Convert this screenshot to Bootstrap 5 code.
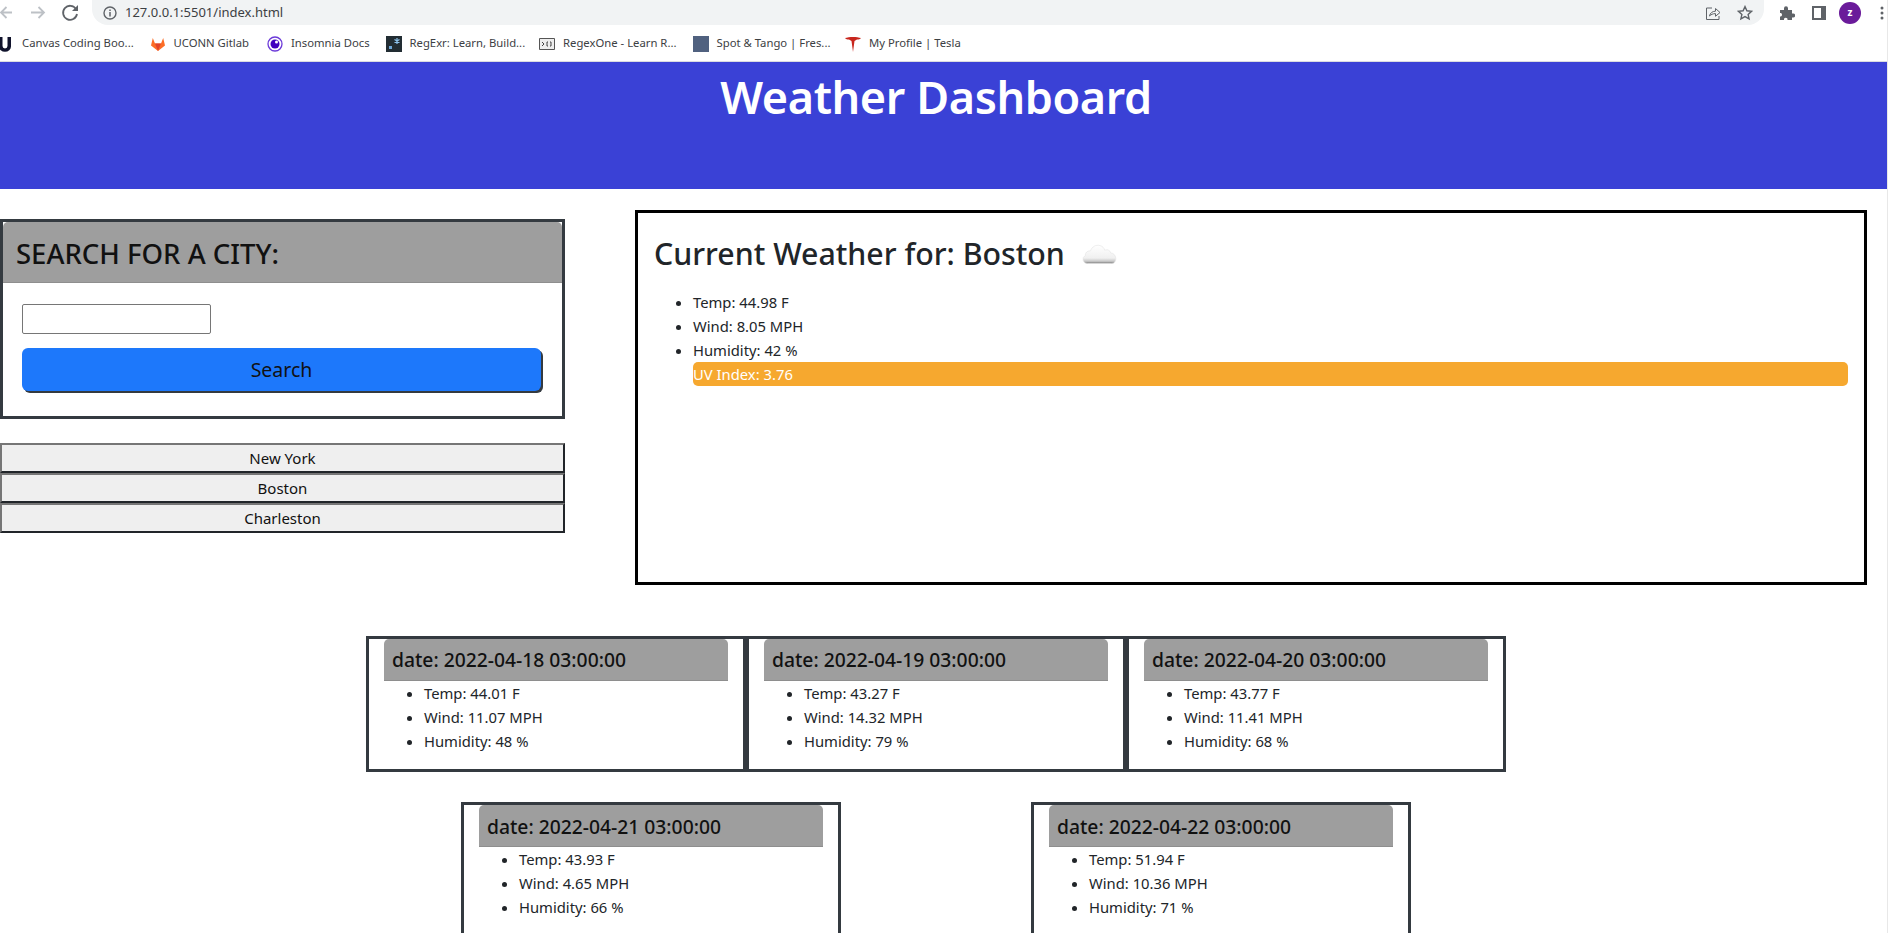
<!DOCTYPE html>
<html lang="en">
<head>
    <meta charset="UTF-8">
    <meta name="viewport" content="width=device-width, initial-scale=1.0">
    <title>Weather Dashboard</title>
    <link rel="stylesheet" href="https://cdn.jsdelivr.net/npm/bootstrap@5.3.0/dist/css/bootstrap.min.css">
    <style>
        html, body {
            height: 933px;
            overflow: hidden;
        }
        body {
            font-family: "Noto Sans", "Open Sans", sans-serif;
            background: #fff;
            border-right: 1px solid #e8e8e8;
        }
        .chrome-bar {
            height: 25px;
            color: #5f6368;
        }
        .chrome-nav {
            width: 92px;
            flex: none;
        }
        .addr-bar {
            background: #f1f3f4;
            border-radius: 0 0 16px 16px;
            padding: 0 7px 0 11px;
            font-size: 13px;
            color: #3c4043;
        }
        .chrome-tools {
            width: 123px;
            flex: none;
        }
        .tool-puzzle { margin-left: 15px; }
        .tool-side { margin-left: 17px; }
        .tool-dots { margin-left: 19px; }
        .avatar {
            width: 22px;
            height: 22px;
            margin-left: 13px;
            background: #6a1b9a;
            color: #fff;
            font-size: 10px;
            font-weight: 700;
        }
        .marks-bar {
            height: 37px;
            font-size: 11.3px;
            color: #3c4043;
            padding-top: 1px;
            border-bottom: 1px solid #dadce0;
            white-space: nowrap;
        }
        .marks-bar svg {
            margin-left: 8.5px;
        }
        .marks-bar svg:first-child {
            margin-left: -2px;
        }
        .page-head {
            height: 127px;
            background: #3a41d6;
            color: #fff;
            padding-right: 15px;
        }
        .page-head h1 {
            font-size: 45px;
            font-weight: 600;
            letter-spacing: -.4px;
            margin: 0;
            padding-top: 8px;
        }
        .side-col {
            width: 565px;
            margin-top: 30px;
        }
        .search-card,
        .day-card {
            border: 3px solid #343a40;
            border-radius: 0;
        }
        .search-head {
            background: #9e9e9e;
            height: 61px;
            padding: 15px 13px 0;
            border-bottom: 1px solid #8e8e8e;
            border-radius: 0;
            color: #111;
        }
        .search-head h3 {
            font-size: 27.5px;
            font-weight: 500;
            margin: 0;
        }
        .search-body {
            padding: 21px 19px 25px;
        }
        .city-input {
            width: 189px;
            height: 30px;
            display: block;
            margin-bottom: 14px;
            border: 1px solid #767676;
            border-radius: 2px;
        }
        .search-btn {
            display: block;
            width: 519px;
            height: 43px;
            font-size: 19.5px;
            line-height: 1;
            background: #1d78fb;
            border: 0;
            color: #111;
            box-shadow: 2px 2px 0 #343a40;
        }
        .city-list {
            margin-top: 24px;
        }
        .city-btn {
            height: 30px;
            width: 100%;
            padding: 0;
            font-size: 15px;
            background: #efefef;
            color: #111;
            border: 2px solid;
            border-color: #767676 #212529 #212529 #767676;
            display: block;
        }
        .now-panel {
            width: 1232px;
            height: 375px;
            margin: 21px 0 0 70px;
            padding: 22px 16px 0;
            border: 3px solid #000;
        }
        .now-panel h2 {
            font-size: 30.3px;
            font-weight: 500;
            margin: 0 0 17px;
            line-height: 38px;
        }
        .now-panel ul {
            padding-left: 39px;
            margin: 0;
            font-size: 14.8px;
        }
        .uv-bar {
            margin-left: 39px;
            font-size: 14.8px;
            line-height: 24px;
            background: #f6a82f;
            color: #fff;
            border-radius: 5px;
        }
        .forecast {
            width: 1872px;
            margin-top: 51px;
        }
        .day-card {
            width: 380px;
            height: 136px;
            padding: 0 15px;
            flex: none;
            font-size: 14.8px;
        }
        .day-head {
            height: 42px;
            padding: 1px 8px 0;
            background: #9e9e9e;
            border-bottom: 1px solid #8e8e8e;
            color: #111;
        }
        .day-head h5 {
            font-size: 19.3px;
            font-weight: 500;
            margin: 0;
        }
        .day-card ul {
            padding-left: 40px;
            margin: 0;
        }
        .forecast-row2 {
            margin-top: 30px;
            gap: 190px;
        }
        .forecast-row2 .day-head {
            padding-top: 3px;
        }
        li {
            line-height: 24px;
        }
    </style>
</head>
<body>
    <div class="chrome-bar d-flex">
        <div class="chrome-nav">
            <svg width="92" height="25" viewBox="0 0 92 25" fill="none">
                <path d="M12 11.500H1M6.500 6L1 11.500 6.500 17" stroke="#bdc1c6" stroke-width="1.800"/>
                <path d="M31 11.500H44M38.500 6L44 11.500 38.500 17" stroke="#bdc1c6" stroke-width="1.800"/>
                <path d="M76 8a7 7 0 1 0 1 5" stroke="#5f6368" stroke-width="1.800"/>
                <path d="M78 4v6h-6z" fill="#5f6368"/>
            </svg>
        </div>
        <div class="addr-bar flex-grow-1 d-flex align-items-center">
            <svg width="14" height="14" viewBox="0 0 14 14" fill="none" class="me-2">
                <circle cx="7" cy="7" r="6" stroke="#5f6368" stroke-width="1.400"/>
                <path d="M7 6v4.500M7 3.500v1.400" stroke="#5f6368" stroke-width="1.500"/>
            </svg>
            <span>127.0.0.1:5501/index.html</span>
            <svg width="16" height="16" viewBox="0 0 16 16" fill="none" class="ms-auto">
                <path d="M7 3H1.500v11.500H14V11" stroke="#5f6368" stroke-width="1"/>
                <path d="M4.500 11c.5-3 3-4.800 6-4.800V3.500L15 7.500l-4.500 3.800V8.600C8 8.600 6 9.500 4.500 11z" stroke="#5f6368" stroke-width="1"/>
            </svg>
            <svg width="16" height="16" viewBox="0 0 16 16" fill="none" class="ms-3 me-1">
                <path d="M8 1.600l1.900 4.200 4.600.5-3.400 3.100 1 4.500L8 11.600l-4.100 2.300 1-4.500L1.500 6.300l4.600-.5z" stroke="#5f6368" stroke-width="1.400"/>
            </svg>
        </div>
        <div class="chrome-tools d-flex align-items-center">
            <svg class="tool-puzzle" width="16" height="16" viewBox="0 0 16 16" fill="#5f6368">
                <path d="M1 5h4V3.200a2 2 0 0 1 4 0V5h4v3.500h1.200a2 2 0 0 1 0 4H13V15H8.500v-1.200a2 2 0 0 0-3.500 0V15H1v-3.500h1a2 2 0 0 0 0-3.500H1z"/>
            </svg>
            <svg class="tool-side" width="14" height="14" viewBox="0 0 14 14" fill="none">
                <path d="M1 1h12v12H1z" stroke="#5f6368" stroke-width="2"/>
                <path d="M9 1h4v12H9z" fill="#5f6368"/>
            </svg>
            <div class="avatar rounded-circle d-flex align-items-center justify-content-center">z</div>
            <svg class="tool-dots" width="4" height="14" viewBox="0 0 4 14" fill="#5f6368">
                <circle cx="2" cy="2" r="1.500"/><circle cx="2" cy="7" r="1.500"/><circle cx="2" cy="12" r="1.500"/>
            </svg>
        </div>
    </div>

    <div class="marks-bar d-flex align-items-center gap-2" id="mark-list"></div>

    <header class="page-head text-center">
        <h1>Weather Dashboard</h1>
    </header>

    <main>
        <div class="d-flex">
            <div class="side-col">
                <div class="card search-card">
                    <div class="card-header search-head"><h3>SEARCH FOR A CITY:</h3></div>
                    <div class="search-body">
                        <input type="text" class="city-input" aria-label="City">
                        <button class="btn search-btn">Search</button>
                    </div>
                </div>
                <div class="city-list">
                    <button class="city-btn">New York</button>
                    <button class="city-btn">Boston</button>
                    <button class="city-btn">Charleston</button>
                </div>
            </div>
            <section class="now-panel">
                <h2 class="d-flex align-items-center">
                    Current Weather for: Boston
                    <svg class="ms-3" width="38" height="24" viewBox="0 0 36 22">
                        <defs>
                            <linearGradient id="cloud" x1="0" y1="0" x2="0" y2="1">
                                <stop offset="0" stop-color="#ffffff"/>
                                <stop offset=".7" stop-color="#f0f0f0"/>
                                <stop offset=".88" stop-color="#c8c8c8"/>
                                <stop offset="1" stop-color="#777777"/>
                            </linearGradient>
                        </defs>
                        <path d="M6 20a4 4 0 0 1-2-7.500c0-3 2-4.500 5-4.500 1.500-4 5-6 9-5 2.500.6 4 2.500 4.500 4.500 2-1 5-.5 5.500 2.500 2.500 0 5 2 5 5.500 0 2.500-1.500 4.500-4 4.500z" fill="url(#cloud)" stroke="#e4e4e4" stroke-width=".6"/>
                    </svg>
                </h2>
                <ul>
                    <li>Temp: 44.98 F</li>
                    <li>Wind: 8.05 MPH</li>
                    <li>Humidity: 42 %</li>
                </ul>
                <div class="uv-bar">UV Index: 3.76</div>
            </section>
        </div>

        <div class="forecast" id="forecast"></div>
    </main>

    <script>
        const marks = [
            {label: "Canvas Coding Boo...", icon: '<path d="M1 1h3.500v9a2.500 2.500 0 0 0 5 0V1H13v9.500a6 5.200 0 0 1-12 0z" fill="#10132c"/>', width: 111},
            {label: "UCONN Gitlab", icon: '<path d="M8 15L1 9.500 2.800 2 5 7.500h6L13.200 2 15 9.500z" fill="#fc6d26"/><path d="M8 15L5 7.500h6z" fill="#e24329"/>', width: 77},
            {label: "Insomnia Docs", icon: '<circle cx="8" cy="8" r="7" fill="#fff" stroke="#6b39d8" stroke-width="1.300"/><circle cx="8" cy="8" r="4.500" fill="#4000bf"/><circle cx="9.500" cy="6" r="1.500" fill="#fff"/>', width: 78},
            {label: "RegExr: Learn, Build...", icon: '<path d="M0 0h16v16H0z" fill="#222d33"/><path d="M3 10h3v3H3z" fill="#6fa8d8"/><path d="M11 2v6M8.500 3.500l5 3M13.500 3.500l-5 3" stroke="#8dc3ec" stroke-width="1.200"/>', width: 113},
            {label: "RegexOne - Learn R...", icon: '<path d="M.5 2.500h15v11H.5z" fill="#eee" stroke="#555"/><path d="M3 6l2 2-2 2M9 6H8v4h1M11 6h1v4h-1" stroke="#444" fill="none"/>', width: 113},
            {label: "Spot & Tango | Fres...", icon: '<path d="M0 0h16v16H0z" fill="#50617f"/>', width: 112},
            {label: "My Profile | Tesla", icon: '<path d="M0 2c4-1.500 12-1.500 16 0-1 1-2 1.500-4 1.500L9.500 5 8 16 6.500 5 4 3.500C2 3.500 1 3 0 2z" fill="#c8261d"/>', width: 88}
        ];

        const days = [
            {date: "2022-04-18", temp: "44.01", wind: "11.07", humidity: 48},
            {date: "2022-04-19", temp: "43.27", wind: "14.32", humidity: 79},
            {date: "2022-04-20", temp: "43.77", wind: "11.41", humidity: 68},
            {date: "2022-04-21", temp: "43.93", wind: "4.65", humidity: 66},
            {date: "2022-04-22", temp: "51.94", wind: "10.36", humidity: 71}
        ];

        function renderMarks() {
            const list = document.getElementById("mark-list");
            list.innerHTML = marks.map(m => `
                <svg width="16" height="16" viewBox="0 0 16 16">${m.icon}</svg>
                <span style="width: ${m.width}px" class="d-block">${m.label}</span>
            `).join("");
        }

        function dayCard(day) {
            return `
                <div class="card day-card">
                    <div class="card-header day-head d-flex align-items-center"><h5>date: ${day.date} 03:00:00</h5></div>
                    <ul>
                        <li>Temp: ${day.temp} F</li>
                        <li>Wind: ${day.wind} MPH</li>
                        <li>Humidity: ${day.humidity} %</li>
                    </ul>
                </div>`;
        }

        function renderForecast() {
            document.getElementById("forecast").innerHTML = `
                <div class="d-flex justify-content-center">${days.slice(0, 3).map(dayCard).join("")}</div>
                <div class="d-flex justify-content-center forecast-row2">${days.slice(3).map(dayCard).join("")}</div>`;
        }

        renderMarks();
        renderForecast();
    </script>
    <script src="https://cdn.jsdelivr.net/npm/bootstrap@5.3.0/dist/js/bootstrap.bundle.min.js"></script>
</body>
</html>
